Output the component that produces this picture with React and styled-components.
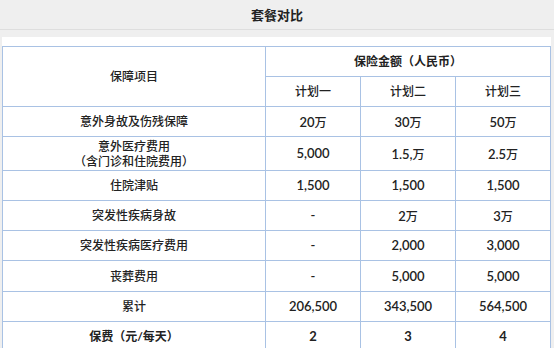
import React from "react";
import styled, { createGlobalStyle } from "styled-components";

const Global = createGlobalStyle`
  html, body { margin: 0; padding: 0; background: #efefef; }
  body { font-family: Lato, "Noto Sans CJK SC", sans-serif; color: #222; }
`;

const Page = styled.div`
  width: 554px;
  height: 348px;
  overflow: hidden;
  background: #efefef;
`;

const TitleBar = styled.header`
  height: 29px;
  display: flex;
  align-items: center;
  justify-content: center;
  border-bottom: 1px solid #dedede;
  font-size: 13px;
  font-weight: 700;
  color: #222;
  font-family: "Noto Sans CJK SC", sans-serif;
`;

const Panel = styled.div`
  margin: 7px 3px 0 2px;
  background: #fff;
  padding-top: 9px;
`;

const Table = styled.table`
  width: 548px;
  border-collapse: collapse;
  table-layout: fixed;
  font-size: 12px;
`;

const Cell = styled.td`
  border: 1px solid #a9c2e4;
  text-align: center;
  vertical-align: middle;
  padding: 0;
  height: ${(p) => p.$h || 29}px;
  font-weight: ${(p) => (p.$bold ? 700 : 500)};
  line-height: 15px;
  color: #222;
`;

const Num = styled.span`
  font-family: Lato, sans-serif;
  font-weight: ${(p) => (p.$bold ? 700 : 600)};
  font-size: 13px;
`;

const Unit = styled.span`
  font-family: "Noto Sans CJK SC", sans-serif;
  font-weight: 500;
  font-size: 12px;
`;

function Value({ v, bold }) {
  if (v.endsWith("万")) {
    return (
      <>
        <Num $bold={bold}>{v.slice(0, -1)}</Num>
        <Unit>万</Unit>
      </>
    );
  }
  return <Num $bold={bold}>{v}</Num>;
}

const rows = [
  { label: "意外身故及伤残保障", vals: ["20万", "30万", "50万"], h: 29 },
  { label: ["意外医疗费用", "（含门诊和住院费用）"], vals: ["5,000", "1.5,万", "2.5万"], h: 33 },
  { label: "住院津贴", vals: ["1,500", "1,500", "1,500"], h: 28 },
  { label: "突发性疾病身故", vals: ["-", "2万", "3万"], h: 28 },
  { label: "突发性疾病医疗费用", vals: ["-", "2,000", "3,000"], h: 28 },
  { label: "丧葬费用", vals: ["-", "5,000", "5,000"], h: 30 },
  { label: "累计", vals: ["206,500", "343,500", "564,500"], h: 29 },
];

export default function App() {
  return (
    <Page>
      <Global />
      <TitleBar>套餐对比</TitleBar>
      <Panel>
        <Table>
          <colgroup>
            <col style={{ width: 263 }} />
            <col style={{ width: 95 }} />
            <col style={{ width: 95 }} />
            <col style={{ width: 95 }} />
          </colgroup>
          <tbody>
            <tr>
              <Cell rowSpan={2}>保障项目</Cell>
              <Cell colSpan={3} $bold $h={29}>保险金额（人民币）</Cell>
            </tr>
            <tr>
              <Cell $h={29}>计划一</Cell>
              <Cell>计划二</Cell>
              <Cell>计划三</Cell>
            </tr>
            {rows.map((r, i) => (
              <tr key={i}>
                <Cell $h={r.h}>
                  {Array.isArray(r.label) ? (
                    <>
                      {r.label[0]}
                      <br />
                      {r.label[1]}
                    </>
                  ) : (
                    r.label
                  )}
                </Cell>
                {r.vals.map((v, j) => (
                  <Cell key={j}>
                    <Value v={v} />
                  </Cell>
                ))}
              </tr>
            ))}
            <tr>
              <Cell $h={27} $bold>保费（元/每天）</Cell>
              <Cell $bold><Value v="2" bold /></Cell>
              <Cell $bold><Value v="3" bold /></Cell>
              <Cell $bold><Value v="4" bold /></Cell>
            </tr>
          </tbody>
        </Table>
      </Panel>
    </Page>
  );
}
